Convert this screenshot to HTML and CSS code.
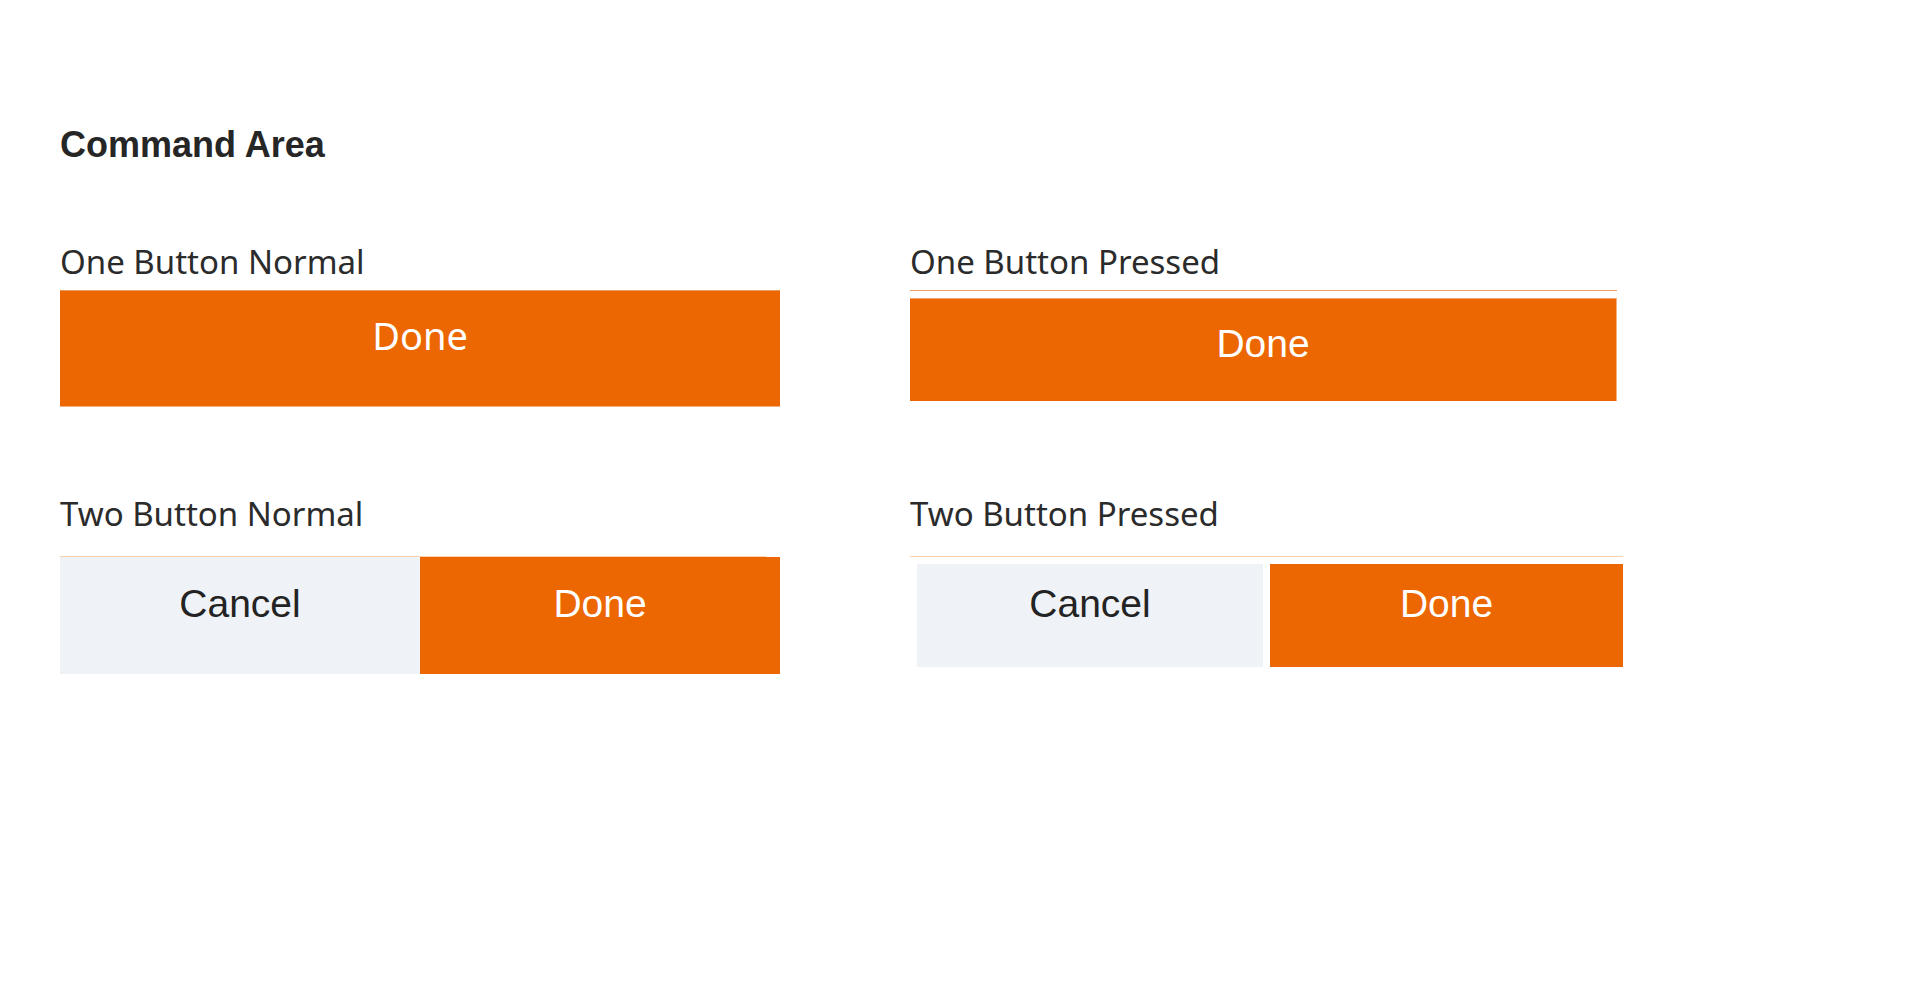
FILE: index.html
```html
<!DOCTYPE html>
<html lang="en">
<head>
<meta charset="utf-8">
<title>Command Area</title>
<link rel="stylesheet" href="styles.css">
</head>
<body>
<main class="page">
  <h1 class="title">Command Area</h1>
  <div class="grid">
    <section class="cell">
      <div class="label">One Button Normal</div>
      <div class="one-normal">
        <div class="btn btn-primary btn-humanist">Done</div>
      </div>
    </section>
    <section class="cell">
      <div class="label">One Button Pressed</div>
      <div class="one-pressed">
        <div class="btn btn-primary">Done</div>
      </div>
    </section>
    <section class="cell">
      <div class="label">Two Button Normal</div>
      <div class="two-normal">
        <div class="btn btn-secondary">Cancel</div>
        <div class="btn btn-primary">Done</div>
      </div>
    </section>
    <section class="cell">
      <div class="label">Two Button Pressed</div>
      <div class="two-pressed">
        <div class="row">
          <div class="btn btn-secondary">Cancel</div>
          <div class="btn btn-primary">Done</div>
        </div>
      </div>
    </section>
  </div>
</main>
</body>
</html>
```

FILE: styles.css
```css
* { box-sizing: border-box; }

html, body {
  margin: 0;
  background: #ffffff;
}

.page {
  padding: 127px 0 0 60px;
  font-family: "Liberation Sans", Arial, sans-serif;
}

.title {
  margin: 0;
  font-family: "Liberation Sans", Arial, sans-serif;
  font-weight: 700;
  font-size: 36px;
  line-height: 36px;
  color: #262626;
}

.grid {
  margin-top: 82px;
  display: grid;
  grid-template-columns: 720px 713px;
  column-gap: 130px;
  row-gap: 90px;
  align-items: start;
}

.cell {
  display: flex;
  flex-direction: column;
}

.label {
  font-family: "Noto Sans", sans-serif;
  font-size: 33px;
  line-height: 34px;
  color: #2b2b2b;
  white-space: nowrap;
}

.btn {
  display: flex;
  justify-content: center;
  align-items: flex-start;
  font-family: "Liberation Sans", Arial, sans-serif;
  font-size: 39px;
  line-height: 39px;
}

.btn-primary {
  background: #ec6602;
  color: #ffffff;
}

.btn-secondary {
  background: #eff2f7;
  color: #232323;
}

.btn-humanist {
  font-family: "Noto Sans", sans-serif;
  font-size: 38px;
  line-height: 38px;
}

/* One button, normal */
.one-normal {
  margin-top: 11px;
  width: 720px;
}
.one-normal .btn {
  height: 117px;
  padding-top: 25px;
  border-top: 1px solid #f19a58;
  border-bottom: 1px solid #f5b07e;
}

/* One button, pressed */
.one-pressed {
  margin-top: 11px;
  width: 707px;
  border-top: 1px solid #f3a068;
  padding-top: 7px;
}
.one-pressed .btn {
  height: 103px;
  padding-top: 25px;
  border-top: 1px solid #f3a068;
  border-right: 1px solid #f6b080;
}

/* Two buttons, normal */
.two-normal {
  margin-top: 26px;
  width: 720px;
  display: grid;
  grid-template-columns: 360px 360px;
  position: relative;
}
.two-normal::before {
  content: "";
  position: absolute;
  left: 0;
  top: -1px;
  width: 706px;
  height: 1px;
  background: #fcd0ad;
}
.two-normal .btn {
  height: 117px;
  padding-top: 27px;
}

/* Two buttons, pressed */
.two-pressed {
  margin-top: 25px;
  width: 713px;
  border-top: 1px solid #fcd0ad;
  padding: 7px 0 0 7px;
}
.two-pressed .row {
  display: grid;
  grid-template-columns: 346px 353px;
  column-gap: 7px;
}
.two-pressed .btn {
  height: 103px;
  padding-top: 20px;
}
```
